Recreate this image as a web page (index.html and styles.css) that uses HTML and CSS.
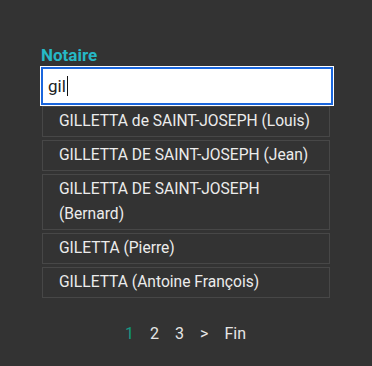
FILE: index.html
```html
<!DOCTYPE html>
<html>
<head>
  <title>Notaire</title>
  <link rel="stylesheet" href="styles.css">
</head>
<body>

<div class="container">
  <label class="field-label" for="notaire">Notaire</label>
  <div class="search-box">
    <span class="search-value">gil</span><span class="caret"></span>
  </div>

  <ul class="suggestions">
    <li>GILLETTA de SAINT-JOSEPH (Louis)</li>
    <li>GILLETTA DE SAINT-JOSEPH (Jean)</li>
    <li>GILLETTA DE SAINT-JOSEPH (Bernard)</li>
    <li>GILETTA (Pierre)</li>
    <li>GILLETTA (Antoine François)</li>
  </ul>

  <div class="pagination">
    <span class="page active">1</span>
    <span class="page">2</span>
    <span class="page">3</span>
    <span class="page">&gt;</span>
    <span class="page">Fin</span>
  </div>
</div>

</body>
</html>
```

FILE: styles.css
```css
body {
  font-family: Roboto, 'Liberation Sans', sans-serif;
  margin: 0;
  padding: 0;
  background: #333333;
  color: #e6e6e6;
}

.container {
  width: 292px;
  margin-left: 40px;
  padding-top: 45px;
}

.field-label {
  display: block;
  padding-left: 1px;
  font-size: 17px;
  font-weight: bold;
  line-height: 21px;
  color: #26b8c6;
}

.search-box {
  height: 34px;
  width: 283px;
  background: white;
  border: 2px solid #1a66dd;
  box-shadow: 0 0 0 1px #ffffff;
  margin: 1px 0 0 1px;
  display: flex;
  align-items: center;
  padding-left: 5px;
  font-size: 17px;
  color: #222;
}

.caret {
  display: inline-block;
  width: 1px;
  height: 20px;
  background: #111;
  margin-left: 1px;
}

.suggestions {
  list-style: none;
  margin: 1px 2px 0 2px;
  padding: 0;
  display: flex;
  flex-direction: column;
  gap: 3px;
}

.suggestions li {
  border: 1px solid #474747;
  padding: 2px 14px 2px 16px;
  font-size: 15.6px;
  line-height: 25px;
  color: #ececec;
}

.pagination {
  display: flex;
  justify-content: center;
  gap: 16px;
  margin-top: 26px;
  padding-right: 1px;
  font-size: 16px;
  color: #e6e6e6;
}

.page.active {
  color: #139a82;
}
```
